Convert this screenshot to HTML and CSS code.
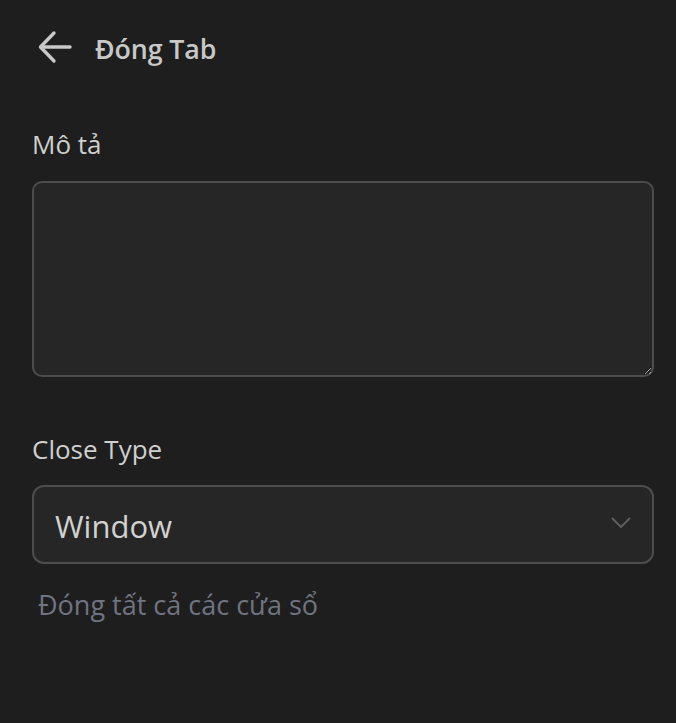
FILE: index.html
```html
<!DOCTYPE html>
<html lang="vi">
<head>
<meta charset="utf-8">
<link rel="stylesheet" href="styles.css">
</head>
<body>
<div class="page">
  <header class="header">
    <svg class="back" width="36" height="36" viewBox="0 0 36 36" fill="none" stroke="#c8c8c8" stroke-width="3.4" stroke-linecap="round" stroke-linejoin="round">
      <path d="M33 18H4"/>
      <path d="M17 4L3.5 18L17 32"/>
    </svg>
    <h1 class="title">Đóng Tab</h1>
  </header>
  <section class="field">
    <label class="label">Mô tả</label>
    <textarea class="textarea"></textarea>
  </section>
  <section class="field field-select">
    <label class="label">Close Type</label>
    <div class="select">
      <span class="select-value">Window</span>
      <svg class="chevron" width="20" height="12" viewBox="0 0 20 12" fill="none" stroke="#5e5e5e" stroke-width="1.8" stroke-linecap="round" stroke-linejoin="round">
        <path d="M1.5 1.5L10 10L18.5 1.5"/>
      </svg>
    </div>
    <p class="hint">Đóng tất cả các cửa sổ</p>
  </section>
</div>
</body>
</html>
```

FILE: styles.css
```css
html, body {
  margin: 0;
  padding: 0;
  background: #1e1e1e;
}
body {
  font-family: "Open Sans", "Noto Sans", sans-serif;
  color: #cfcfcf;
  width: 676px;
  height: 723px;
  overflow: hidden;
}
.page {
  padding: 0 22px 0 32px;
}
.header {
  display: flex;
  align-items: center;
  height: 96px;
  padding-left: 5px;
}
.back {
  display: block;
  margin-top: -2px;
}
.title {
  margin: 0 0 0 22px;
  font-size: 26.8px;
  font-weight: 600;
  color: #c8c8c8;
  letter-spacing: -0.1px;
}
.field {
  display: flex;
  flex-direction: column;
}
.label {
  font-size: 26px;
  line-height: 32px;
  color: #cfcfcf;
  margin-top: 32px;
}
.textarea {
  margin-top: 21px;
  box-sizing: border-box;
  height: 196px;
  background: #262626;
  border: 2px solid #4d4d4d;
  border-radius: 10px;
  resize: vertical;
  outline: none;
  color-scheme: dark;
}
.field-select .label {
  margin-top: 56px;
}
.select {
  margin-top: 20px;
  height: 79px;
  box-sizing: border-box;
  background: #262626;
  border: 2px solid #4d4d4d;
  border-radius: 12px;
  display: flex;
  align-items: center;
  justify-content: space-between;
  padding: 0 21px 0 21px;
}
.select-value {
  font-size: 31px;
  color: #d2d2d2;
  margin-top: 2px;
}
.chevron {
  display: block;
  margin-top: -4px;
}
.hint {
  margin: 22px 0 0 6px;
  font-size: 27px;
  color: #6f7480;
}
```
